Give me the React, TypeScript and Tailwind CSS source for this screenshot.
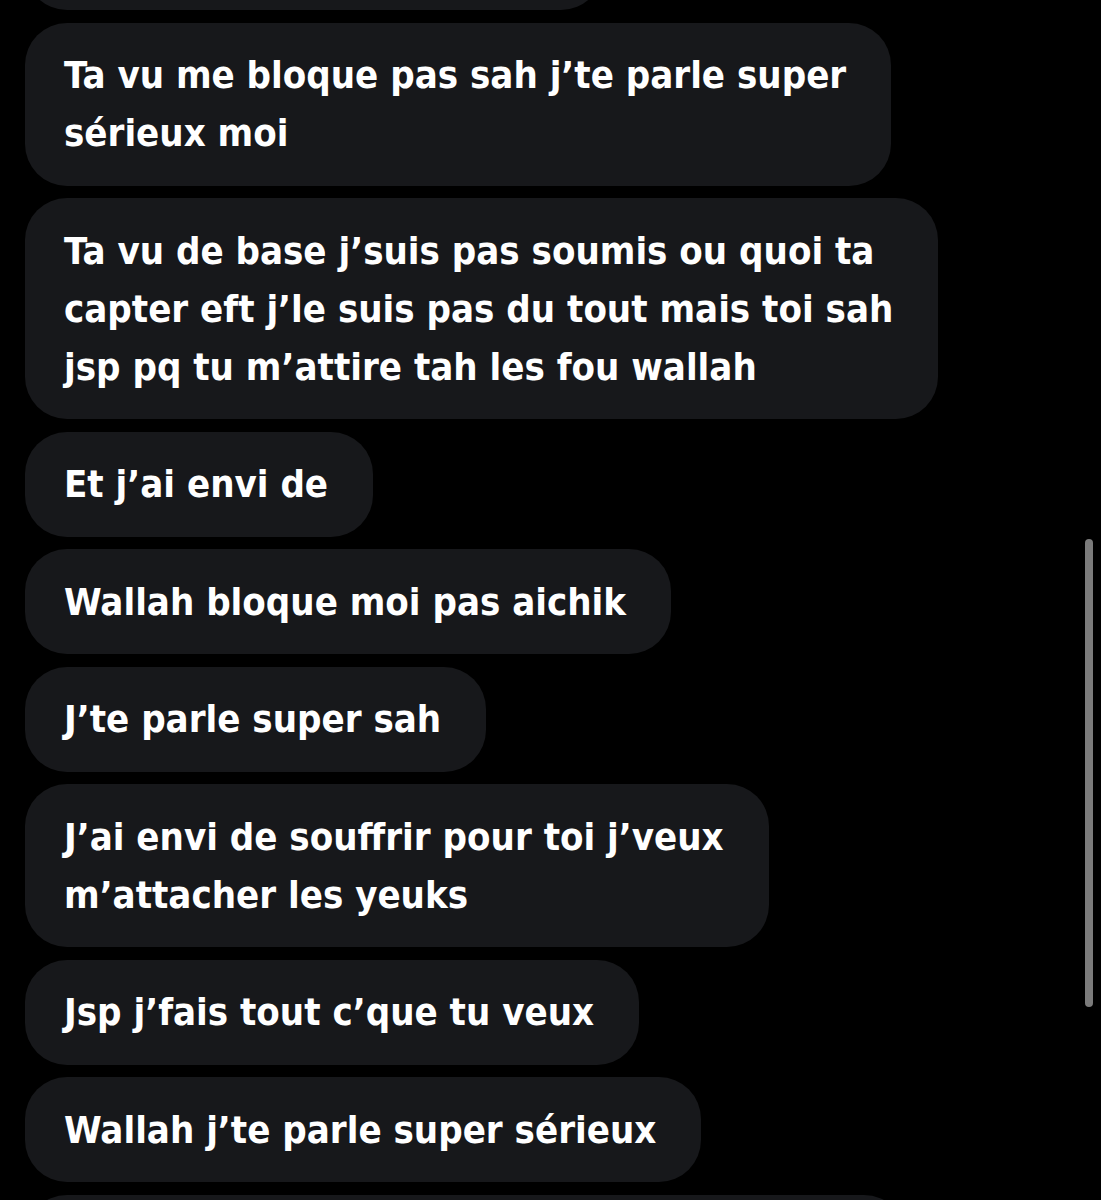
const messages: string[][] = [
  ["Ta vu me bloque pas sah j’te parle super", "sérieux moi"],
  [
    "Ta vu de base j’suis pas soumis ou quoi ta",
    "capter eft j’le suis pas du tout mais toi sah",
    "jsp pq tu m’attire tah les fou wallah",
  ],
  ["Et j’ai envi de"],
  ["Wallah bloque moi pas aichik"],
  ["J’te parle super sah"],
  ["J’ai envi de souffrir pour toi j’veux", "m’attacher les yeuks"],
  ["Jsp j’fais tout c’que tu veux"],
  ["Wallah j’te parle super sérieux"],
];

function Bubble({ lines }: { lines: string[] }) {
  return (
    <div className="bg-[#17181b] rounded-[42px] pl-[39px] pr-[45px] py-[23.5px] text-white font-bold text-[38px] leading-[58px] whitespace-nowrap">
      {lines.map((l) => (
        <div key={l}>{l}</div>
      ))}
    </div>
  );
}

export default function App() {
  return (
    <div className="relative h-[1200px] w-[1101px] overflow-hidden bg-black font-['DejaVu_Sans_Condensed','DejaVu_Sans',sans-serif]">
      <div className="flex flex-col items-start gap-[12.5px] pl-[25px]">
        {/* previous message, mostly scrolled out */}
        <div className="-mt-[95px] h-[105px] w-[578px] rounded-[42px] bg-[#17181b]" />
        {messages.map((m, i) => (
          <Bubble key={i} lines={m} />
        ))}
        <div className="h-[105px] w-[881px] rounded-[42px] bg-[#17181b]" />
      </div>

      {/* scroll indicator */}
      <div className="absolute left-[1085px] top-[539px] h-[468px] w-[8px] rounded-full bg-[#7b7b7b]" />
    </div>
  );
}
